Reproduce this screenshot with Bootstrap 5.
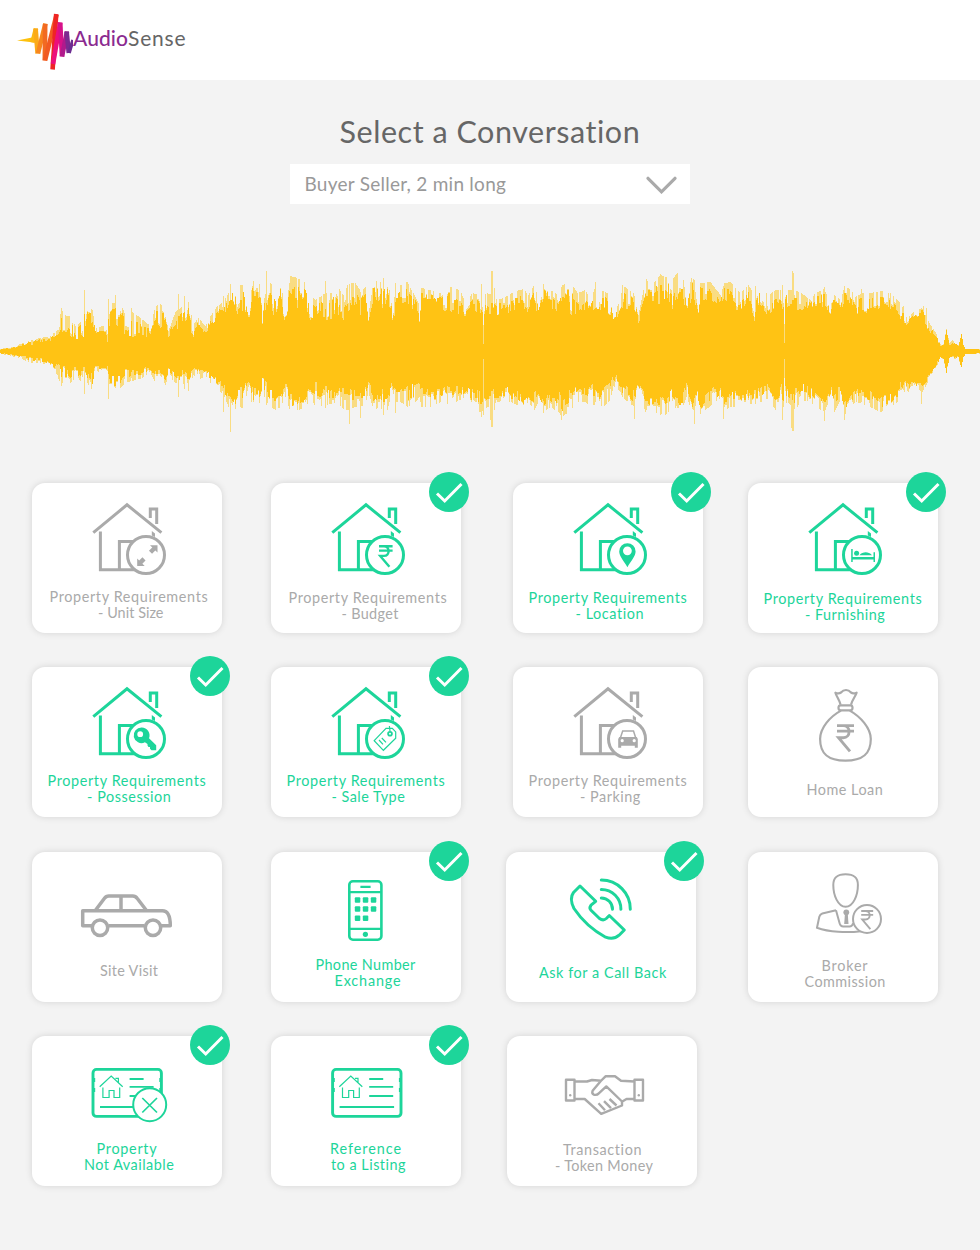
<!DOCTYPE html>
<html lang="en">
<head>
<meta charset="utf-8">
<meta name="viewport" content="width=device-width, initial-scale=1">
<title>AudioSense</title>
<link href="https://cdn.jsdelivr.net/npm/bootstrap@5.3.0/dist/css/bootstrap.min.css" rel="stylesheet">
<style>
  body { background: #f3f3f3; font-family: Lato, "Liberation Sans", sans-serif; color: #666; }
  .topbar { height: 80px; }
  .brand-mark { margin-left: 16px; margin-top: 10px; }
  .brand-name { font-size: 21px; line-height: 26px; margin-top: 25px; }
  .brand-audio { color: #8b2a90; font-weight: 500; }
  .page-title { font-size: 30.5px; line-height: 36px; margin: 33px 0 0 339.5px; font-weight: 400; }
  .chooser { width: 400px; height: 40px; margin-top: 15px; padding-left: 14.5px; padding-right: 12px; color: #999; font-size: 19px; border: 0; border-radius: 0; }
  .wave { margin-top: 56px; height: 180px; }
  .topics { display: grid; grid-template-columns: 239px 242px 235px 190px; grid-template-rows: 184px 185px 184px 150px; margin: 43px 0 0 32px; padding-bottom: 60px; }
  .topic { width: 190px; height: 150px; border: 0; border-radius: 13px; box-shadow: 0 0 7px rgba(0,0,0,.13); color: #aaa; --ink: #aaa; }
  .topic.picked { color: #1dd59a; --ink: #1dd59a; }
  .topic.muted-label { color: #aaa; }
  .nudge-7 { margin-left: -7px; }
  .nudge-6 { margin-left: -6px; }
  .topic-art { stroke: var(--ink); fill: none; color: var(--ink); }
  .solid { fill: var(--ink); stroke: none; }
  .topic-line { font-size: 14.4px; line-height: 16px; height: 16px; white-space: nowrap; }
  .tick { top: -11px; right: -8px; width: 40px; height: 40px; background: #1dd59a; }
  .fit { white-space: nowrap; }
</style>
</head>
<body>
<header class="topbar bg-white d-flex align-items-start">
  <svg class="brand-mark flex-shrink-0" width="57" height="62" viewBox="16 10 57 62" fill="none" stroke-width="4.6" stroke-linejoin="round">
    <path d="M17 40.600 32 37.500 34 42.500Z" fill="#fdc10e"/>
    <path d="M32.500 42.500 36 28.500" stroke="#fcb813"/>
    <path d="M35.600 28.500 37.600 53.500" stroke="#fbaa19"/>
    <path d="M38 53.500 45.400 23.500" stroke="#f7861f"/>
    <path d="M45.200 24 44.800 60.500" stroke="#f26a22"/>
    <path d="M45 60.500 56.600 14.500" stroke="#f15a22"/>
    <path d="M56.200 14 52.600 69.500" stroke="#ee2524"/>
    <path d="M53 64 60.200 22.500" stroke="#ec0f7c"/>
    <path d="M60.200 22.500 62 56.500" stroke="#d6128a"/>
    <path d="M62 56.500 67 31.500" stroke="#b01a8c"/>
    <path d="M66.600 31.500 68.800 53" stroke="#7b2a90"/>
    <path d="M69 53 73 40" stroke="#6c2c91" stroke-width="3.600"/>
  </svg>
  <div class="brand-name d-flex"><span class="brand-audio fit" data-w="55">Audio</span><span class="fit" data-w="58">Sense</span></div>
</header>

<main>
  <h1 class="page-title"><span class="fit" data-w="301">Select a Conversation</span></h1>
  <button type="button" class="chooser bg-white d-flex align-items-center justify-content-between mx-auto">
    <span class="fit" data-w="201.5">Buyer Seller, 2 min long</span>
    <svg width="33" height="20" viewBox="0 0 33 20" fill="none" stroke="#aaa" stroke-width="3.200" stroke-linecap="round"><path d="M3 4.300 16.500 17.800 30 4.300"/></svg>
  </button>
  <svg class="wave d-block w-100" viewBox="0 0 980 180" preserveAspectRatio="none" shape-rendering="crispEdges" id="wave"></svg>
  <section class="topics" id="topics"></section>
</main>

<svg width="0" height="0" class="position-absolute">
  <defs>
    <g id="house" stroke-width="3">
      <path d="M61.300 49.700 95 21.800l34.400 27.900"/>
      <path d="M68.400 48.500V86.700H104M87.400 86.700V58.400H104M118.300 35V26h6.400v15"/>
      <path class="solid" d="M119.800 48 123 50.600V54l-3.200-1.500z"/>
      <circle cx="114" cy="72" r="18.500" fill="#fff"/>
    </g>
    <g id="rupee"><path d="M0 0h13.600M0 4.400h13.600M0 0h5c6.200 0 6.200 9.700 0 9.700H1.200L10.400 20.600"/></g>
    <g id="listing">
      <rect x="61" y="33.400" width="68.400" height="47" rx="3.500" stroke-width="2.900"/>
      <path stroke-width="1.200" d="M67.700 50.700 79.200 40l11.500 10.700M70.900 51.500v10h6.200v-7h4.900v7h5.700v-10M83.400 42.300h3v4.200"/>
      <path stroke-width="1.900" d="M97.600 43h14M97.600 50.900h24M97.600 60h24M68 71h54.500"/>
      <path stroke-width="1.400" d="M62.500 42v4M62.500 52v4M128 42v4M128 52v4"/>
    </g>
  </defs>
</svg>

<script src="https://cdn.jsdelivr.net/npm/bootstrap@5.3.0/dist/js/bootstrap.bundle.min.js"></script>
<script>
const house = '<use href="#house"/>';
const art = {
  size: house + '<path d="M118.500 69.300 123 64.800M107.500 80.400 112 75.900" stroke-width="4.400"/><path class="solid" d="M118 62.200h7.500v7.400zM105.200 75.400v7.500h7.500z"/>',
  budget: house + '<use href="#rupee" x="108" y="63.200" stroke-width="2.400"/>',
  location: house + '<path class="solid" fill-rule="evenodd" d="M114.400 60.200a8.200 8.200 0 0 1 8.200 8.200c0 5-5 9.600-8.200 15.900-3.200-6.300-8.200-10.900-8.200-15.900a8.200 8.200 0 0 1 8.200-8.200zm0 3.200a4.400 4.400 0 1 0 0 8.800 4.400 4.400 0 0 0 0-8.800z"/>',
  furnishing: house + '<path class="solid" d="M103.200 66h1.500v8h20.800v-4.700h1.500v9.600h-1.500v-2.400h-20.800v2.400h-1.500zM111.500 72.200c1.500-2.200 4-3 6.200-3s4.500.8 6.300 3z"/><circle class="solid" cx="108.600" cy="70.200" r="2.500"/>',
  key: house + '<path class="solid" fill-rule="evenodd" d="M109.800 60.500a7.800 7.800 0 0 1 7.200 10.700l7.200 7v5h-4.700l-1.500-1.400v-1.700h-1.500l-1-1.600v-1.600l-2.600-1.600a7.800 7.800 0 1 1-3.100-14.800zm-1.600 3.800a2.900 2.900 0 1 0 0 5.800 2.900 2.900 0 0 0 0-5.800z"/>',
  tag: house + '<g stroke-width="1.200"><path d="M103.200 73.700 115 61.400h6.300l3.400 3.500v6.400l-12.300 12zM108 73l4 4.400M110.800 71l4.200 4.400M118.400 59l.6 5"/><circle cx="119" cy="66.700" r="1.900" stroke-width="1.800"/></g>',
  parking: house + '<path d="M107.500 70.600l2.200-6.600h10.800l2.100 6.600" stroke-width="1.500"/><path class="solid" d="M106.300 70h17.500l1 2v8.700h-3v-2h-13.600v2h-3V72z"/><g fill="#fff" stroke="none"><circle cx="109.200" cy="73.700" r="1.600"/><circle cx="121.200" cy="73.700" r="1.600"/></g>',
  loan: '<g stroke-width="2.200" stroke-linejoin="round"><path d="M92.600 37.700C91.500 33 88.500 29.500 87.400 25.700c2.200.9 4.200.8 5.600-.2 1.700-2 3-2.500 5-2.500s3.300.5 5 2.500c1.400 1 3.400 1.100 5.600.2-1.100 3.800-4.600 7.300-5.600 12"/><rect x="90.500" y="38.300" width="14" height="5" rx="2.300"/><path d="M93 43.600C82 49.500 72.100 61 72.100 72c0 15.500 8.500 21.700 25.300 21.700S122.800 87.500 122.800 72c0-11-10.500-22.500-21-28.400"/></g><g transform="translate(89 58.600) scale(1.250)"><use href="#rupee" stroke-width="2.300"/></g>',
  car: '<g stroke-width="3.500" stroke-linejoin="round"><path d="M60 73.700h-9.300v-15h79.600c5 0 8 4.500 8 15H129M76.500 73.700h36M63.500 58.300 72.300 46.500q1.800-2.500 4.500-2.500h24q2.700 0 4.500 2.500l9 11.800M89 44v14.500"/><circle cx="68" cy="75.700" r="7.700"/><circle cx="121" cy="75.700" r="7.700"/></g>',
  phone: '<rect x="78.300" y="29.300" width="32.100" height="58.400" rx="3.600" stroke-width="2.600"/><path stroke-width="2.200" d="M78 40.100h32M78 76.800h32M89.400 34.900h10.200"/><g class="solid">' + [48,57,66.3].map((y,r)=>[86.5,94.5,102.5].slice(0,r==2?2:3).map(x=>`<rect x="${x-2.7}" y="${y-2.7}" width="5.5" height="5.5" rx="1"/>`).join('')).join('') + '<circle cx="94.400" cy="82.300" r="2.600"/></g>',
  call: '<g stroke-width="3" stroke-linejoin="round" stroke-linecap="round"><path d="M74 34 89.700 49.300 85 53.200q-2.200 2.800 0 5l8.500 8.300q3.800 2.700 6.800 0l3-3 15 14.500-5.200 5.200q-5.500 5-13.500 2Q80 74.500 68 56.500q-5-10-.5-16z"/><path d="M95.300 28A29 29 0 0 1 124.300 57.300M95.300 37.400a19.600 19.600 0 0 1 19.600 19.900M95.300 45.900a11.200 11.200 0 0 1 11.200 11.400"/></g>',
  broker: '<g stroke-width="2"><path d="M97.600 22.300c8 0 12.300 2.700 12.300 10.700 0 10-4.500 21.800-12.300 21.800S85.300 43 85.300 33c0-8 4.300-10.700 12.300-10.700zM88 58.300 74.300 61.500q-2.300.7-3 3.300L69 75.700c12 4.500 30 5.300 44 3.500M88 58.300l3.600 13q1 3.300 3.500 3.300h6.500q2.500 0 3.500-3.300"/><circle cx="119" cy="67" r="14" fill="#fff"/></g><circle class="solid" cx="98.300" cy="60.300" r="2.900"/><path class="solid" d="M97 61h2.700l.8 11h-4.300z"/><g transform="translate(113.200 59) scale(.88)"><use href="#rupee" stroke-width="2.200"/></g>',
  gone: '<use href="#listing"/><circle cx="117.700" cy="68.700" r="16.500" fill="#fff" stroke-width="2"/><path d="M110.300 62 125 76.500M125 62 110.300 76.500" stroke-width="1.700"/>',
  listing: '<use href="#listing" x="0.600"/>',
  hands: '<g stroke-width="2.400" stroke-linejoin="round"><path d="M59 43.700h8.500v20.800H59zM127.500 43.700h8.500v20.800h-8.500zM67.500 45.500H80l5-1.500 9 .8M127.500 45.500 114 44.800 108 40.300h-9.500L93.800 45 85.600 54.800q-1 2.700 1.200 3.800 3 1 5-1.200l7.500-7 15.700 15.100v4L94.200 77.800 77.700 63H67.500M127.500 63h-8l-5 3"/><path d="M91.500 67.200l6.500 7M97 65.200l7 7M102.500 63l7 6.500"/></g><circle class="solid" cx="63.200" cy="59.300" r="1.200"/><circle class="solid" cx="131.800" cy="59.300" r="1.200"/>'
};

/* base: first text baseline from the card top; lines: [text, left, width] */
const topics = [
  {art:'size', base:119, lines:[['Property Requirements',17.5,158.5],['- Unit Size',66,65.5]]},
  {art:'budget', on:1, cls:'muted-label', base:120, lines:[['Property Requirements',17.5,158.5],['- Budget',70.5,57]]},
  {art:'location', on:1, base:120, lines:[['Property Requirements',15.5,158.5],['- Location',62.5,68.5]]},
  {art:'furnishing', on:1, base:121, lines:[['Property Requirements',15.5,158.5],['- Furnishing',57,80]]},
  {art:'key', on:1, base:119, lines:[['Property Requirements',15.5,158.5],['- Possession',55,84]]},
  {art:'tag', on:1, base:119, lines:[['Property Requirements',15.5,158.5],['- Sale Type',60.5,73.5]]},
  {art:'parking', base:119, lines:[['Property Requirements',15.5,158.5],['- Parking',67,60.5]]},
  {art:'loan', base:128, lines:[['Home Loan',58.5,76.5]]},
  {art:'car', base:124, lines:[['Site Visit',68,58]]},
  {art:'phone', on:1, base:118, lines:[['Phone Number',44.5,100],['Exchange',63.5,66.5]]},
  {art:'call', on:1, cls:'nudge-7', base:126, lines:[['Ask for a Call Back',33,127.5]]},
  {art:'broker', base:119, lines:[['Broker',73.5,46.5],['Commission',56.5,81]]},
  {art:'gone', on:1, base:118, lines:[['Property',64.5,60.5],['Not Available',52,90]]},
  {art:'listing', on:1, base:118, lines:[['Reference',59,71.5],['to a Listing',60,75]]},
  {art:'hands', cls:'nudge-6', base:119, lines:[['Transaction',56,79],['- Token Money',48,98]]}
];
document.getElementById('topics').innerHTML = topics.map(t => `
  <article class="topic card position-relative ${t.on ? 'picked' : ''} ${t.cls || ''}">
    ${t.on ? '<span class="tick position-absolute rounded-circle"><svg class="d-block" width="40" height="40" fill="none" stroke="#fff" stroke-width="3"><path d="M8 21.500 15.700 29 32.500 12"/></svg></span>' : ''}
    <svg class="topic-art d-block" width="190" height="${t.base - 13}">${art[t.art]}</svg>
    ${t.lines.map(l => `<div class="topic-line" style="margin-left:${l[1]}px"><span class="fit" data-w="${l[2]}">${l[0]}</span></div>`).join('')}
  </article>`).join('');

/* Envelope samples: x, inner top, outer top, inner bottom, outer bottom */
const env = `0 90 89 93 94;10 89 87 94 96;20 87 84 95 98;30 85 80 97 103;40 83 78 98 103;50 82 76 100 105;57 78 70 101 115;61 70 54 103 120;66 70 60 107 118;70 75 60 110 120;75 78 70 106 115;80 75 66 104 125;83 81 80 104 108;87 60 50 108 120;92 65 54 110 128;95 77 72 105 108;105 76 69 105 110;107 80 78 104 108;110 66 48 115 127;116 64 46 115 127;120 65 46 115 125;125 75 60 108 120;131 75 55 108 118;140 75 62 108 116;150 75 70 106 110;155 60 50 110 120;160 68 48 110 118;164 65 50 112 125;168 77 75 108 112;175 72 56 110 120;182 68 50 110 120;188 62 46 113 128;193 78 68 108 112;198 72 62 109 118;205 73 70 108 112;210 65 60 112 120;217 58 50 115 126;223 55 46 122 132;228 44 38 135 145;233 42 30 140 150;237 56 30 130 143;243 50 30 130 147;248 62 60 118 125;252 40 27 130 145;258 40 22 132 145;262 62 50 120 130;266 60 35 124 140;270 42 28 130 145;275 62 35 130 148;280 45 27 130 145;285 62 55 122 135;290 48 21 135 150;297 48 23 133 148;305 42 28 132 146;310 62 40 122 135;315 62 45 125 145;325 58 38 128 143;331 62 38 125 142;335 50 28 130 140;343 60 40 128 147;348 50 28 130 148;355 48 28 130 145;360 58 36 130 145;365 38 32 130 142;368 63 60 122 130;373 50 26 130 148;379 44 26 130 145;383 52 28 130 148;387 34 21 135 148;392 62 55 122 128;395 50 35 132 140;400 47 30 132 140;407 48 27 128 145;415 50 42 125 140;419 60 50 122 135;421 38 33 130 145;430 38 35 133 145;440 48 38 130 140;444 58 28 120 140;448 54 32 128 142;455 58 33 125 140;460 54 36 128 138;465 55 48 124 135;472 52 38 130 148;480 58 40 130 150;487 53 38 128 145;497 55 45 130 140;505 52 42 128 138;515 50 36 132 142;523 47 34 138 146;528 55 40 130 140;534 44 29 135 148;538 55 45 130 140;543 38 27 140 150;550 44 35 135 145;558 56 40 128 150;562 38 30 140 155;570 52 27 130 148;577 58 38 128 140;585 48 35 128 140;590 50 44 128 145;595 50 32 125 142;603 50 36 130 145;610 55 40 124 138;613 67 60 115 124;620 58 45 122 130;622 47 30 125 135;630 52 36 130 142;635 60 40 132 145;638 63 60 122 130;645 50 25 135 150;653 44 28 142 150;660 42 20 138 152;665 38 22 140 153;672 54 24 130 145;677 38 18 138 146;682 38 18 138 146;686 60 45 122 135;692 38 18 142 150;697 60 50 125 140;700 37 28 140 152;710 42 27 130 144;720 52 40 128 136;724 38 28 135 148;730 44 27 136 145;740 50 38 130 145;748 40 30 132 143;754 60 40 128 140;760 46 30 130 140;768 55 40 126 136;775 46 35 130 148;781 52 35 126 148;787 48 35 130 140;795 50 35 130 148;801 48 38 125 138;810 50 45 130 140;815 44 38 132 145;824 48 34 140 150;830 55 50 128 135;834 42 40 130 150;840 55 45 130 138;844 42 32 143 153;850 45 34 138 145;855 54 42 132 140;862 50 38 132 142;870 52 38 132 145;880 46 36 140 150;890 48 38 135 145;900 58 48 125 138;905 68 58 118 128;910 62 55 120 135;915 58 50 122 128;922 54 48 122 132;926 68 57 118 125;930 74 65 108 118;935 79 72 104 110;940 86 84 97 98;943 85 82 98 100;946 71 69 110 114;949 86 83 97 98;952 84 80 96 99;958 86 85 96 98;961 75 73 107 109;963 86 84 96 98;965 89 89 94 94;980 90 89 93 94`.split(';').map(r => r.split(' ').map(Number));
/* Isolated peaks: x, top, bottom */
const peaks = {61:[48,126],84:[30,134],108:[39,139],115:[35,128],131:[48,118],178:[34,137],184:[36,129],223:[36,152],230:[24,172],266:[11,145],325:[21,148],349:[24,164],360:[32,158],383:[18,155],395:[23,153],481:[24,157],490:[34,160],491:[11,167],492:[11,167],494:[28,150],543:[24,153],561:[27,160],595:[22,142],634:[36,159],646:[19,150],660:[14,155],676:[14,146],694:[20,164],723:[26,159],755:[26,144],782:[25,160],791:[30,168],792:[11,171],793:[13,171],824:[27,161],844:[26,160],861:[29,142],903:[46,130],921:[48,144],923:[46,130],926:[48,125]};
const gaps = {483:[84,99,65,155],784:[83,99,64,118]};
let seed = 7;
const rnd = () => (seed = (seed * 16807) % 2147483647) / 2147483647;
let light = '', full = '', k = 0, hold = 0, a, b, c, d;
for (let x = 0; x < 980; x++) {
  while (k < env.length - 2 && env[k + 1][0] <= x) k++;
  const p = env[k], q = env[k + 1], f = (x - p[0]) / (q[0] - p[0]);
  const e = [1, 2, 3, 4].map(i => p[i] + (q[i] - p[i]) * f);
  const loud = x > 222 && x < 905;
  if (loud) { e[0] += 2; e[1] -= 5; e[2] -= 3; e[3] += 2; }
  else if (x > 57 && x < 222) { e[0] += 2; e[1] -= 4; e[3] += 3; }
  if (hold-- <= 0) { a = rnd(); b = rnd(); c = rnd(); d = rnd(); hold = rnd() < .5 ? 1 : 0; }
  const burst = b > .55 ? 1 : b * .6;
  let st = e[0] + (e[1] - e[0]) * a * .8;
  let lt = st + (e[1] - st) * burst;
  let sb = e[2] + (e[3] - e[2]) * c * .75;
  let lb = sb + (e[3] - sb) * (d > .6 ? 1 : d * .7);
  if (peaks[x]) { lt = peaks[x][0]; lb = peaks[x][1]; st = Math.min(st, lt + (90 - lt) * .4); }
  if (gaps[x]) [st, sb, lt, lb] = gaps[x];
  light += `M${x} ${lt.toFixed(1)}h1V${lb.toFixed(1)}h-1z`;
  full += `M${x} ${Math.round(st)}h1V${Math.round(sb)}h-1z`;
}
document.getElementById('wave').innerHTML = `<path fill="#f9dc82" d="${light}"/><path fill="#ffc314" d="${full}"/>`;

/* Spread letters so that every label fills its measure */
document.querySelectorAll('.fit').forEach(el => {
  const gap = (el.dataset.w - el.getBoundingClientRect().width) / (el.textContent.length - .5);
  el.style.letterSpacing = gap.toFixed(3) + 'px';
});
</script>
</body>
</html>
